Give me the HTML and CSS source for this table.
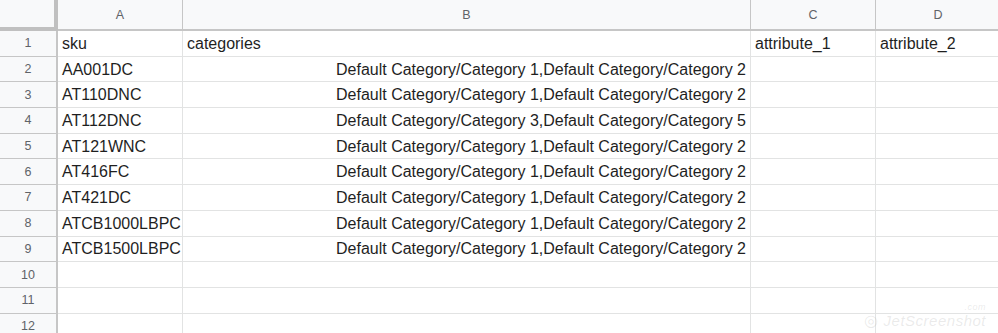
FILE: index.html
```html
<!DOCTYPE html>
<html>
<head>
<meta charset="utf-8">
<link rel="stylesheet" href="styles.css">
</head>
<body>
<div class="sheet">
  <div class="corner"></div>
  <div class="colh">A</div>
  <div class="colh">B</div>
  <div class="colh">C</div>
  <div class="colh">D</div>

  <div class="rowh">1</div><div class="cell">sku</div><div class="cell">categories</div><div class="cell">attribute_1</div><div class="cell">attribute_2</div>
  <div class="rowh">2</div><div class="cell">AA001DC</div><div class="cell num">Default Category/Category 1,Default Category/Category 2</div><div class="cell"></div><div class="cell"></div>
  <div class="rowh">3</div><div class="cell">AT110DNC</div><div class="cell num">Default Category/Category 1,Default Category/Category 2</div><div class="cell"></div><div class="cell"></div>
  <div class="rowh">4</div><div class="cell">AT112DNC</div><div class="cell num">Default Category/Category 3,Default Category/Category 5</div><div class="cell"></div><div class="cell"></div>
  <div class="rowh">5</div><div class="cell">AT121WNC</div><div class="cell num">Default Category/Category 1,Default Category/Category 2</div><div class="cell"></div><div class="cell"></div>
  <div class="rowh">6</div><div class="cell">AT416FC</div><div class="cell num">Default Category/Category 1,Default Category/Category 2</div><div class="cell"></div><div class="cell"></div>
  <div class="rowh">7</div><div class="cell">AT421DC</div><div class="cell num">Default Category/Category 1,Default Category/Category 2</div><div class="cell"></div><div class="cell"></div>
  <div class="rowh">8</div><div class="cell">ATCB1000LBPC</div><div class="cell num">Default Category/Category 1,Default Category/Category 2</div><div class="cell"></div><div class="cell"></div>
  <div class="rowh">9</div><div class="cell">ATCB1500LBPC</div><div class="cell num">Default Category/Category 1,Default Category/Category 2</div><div class="cell"></div><div class="cell"></div>
  <div class="rowh">10</div><div class="cell"></div><div class="cell"></div><div class="cell"></div><div class="cell"></div>
  <div class="rowh">11</div><div class="cell"></div><div class="cell"></div><div class="cell"></div><div class="cell"></div>
  <div class="rowh">12</div><div class="cell"></div><div class="cell"></div><div class="cell"></div><div class="cell"></div>
</div>
<div class="watermark"><span class="wm-icon">◎</span> JetScreenshot<span class="wm-com">.com</span></div>
</body>
</html>
```
FILE: styles.css
```css
html, body {
  margin: 0;
  padding: 0;
  background: #ffffff;
  overflow: hidden;
}
body {
  width: 998px;
  height: 333px;
  position: relative;
  font-family: "Liberation Sans", Arial, sans-serif;
}
.sheet {
  display: grid;
  grid-template-columns: 58px 125px 568px 125px 125px;
  grid-template-rows: 31px repeat(12, 25.7px);
  width: 1001px;
}
.corner {
  background: #f8f9fa;
  border-right: 4px solid #c0c0c0;
  border-bottom: 4px solid #c0c0c0;
  box-sizing: border-box;
}
.colh {
  background: #f8f9fa;
  color: #5f6368;
  font-size: 12.5px;
  display: flex;
  align-items: center;
  justify-content: center;
  border-right: 1px solid #c6c6c6;
  border-bottom: 2px solid #c6c6c6;
  box-sizing: border-box;
  padding-top: 1px;
}
.rowh {
  background: #f8f9fa;
  color: #5f6368;
  font-size: 12.5px;
  display: flex;
  align-items: center;
  justify-content: center;
  border-right: 2px solid #c6c6c6;
  border-bottom: 1px solid #c6c6c6;
  box-sizing: border-box;
}
.cell {
  font-size: 16px;
  color: #1f1f1f;
  display: flex;
  align-items: center;
  padding: 1px 4px 0 4px;
  border-right: 1px solid #e2e3e3;
  border-bottom: 1px solid #e2e3e3;
  box-sizing: border-box;
  white-space: nowrap;
  overflow: hidden;
}
.cell.num {
  justify-content: flex-end;
}
.watermark {
  position: absolute;
  right: 12px;
  bottom: 3px;
  color: rgba(160, 160, 160, 0.22);
  font-size: 15px;
  font-style: italic;
  letter-spacing: 0.5px;
}
.wm-icon {
  font-style: normal;
  font-size: 16px;
}
.wm-com {
  position: absolute;
  right: 0;
  top: -9px;
  font-size: 9px;
}
```
